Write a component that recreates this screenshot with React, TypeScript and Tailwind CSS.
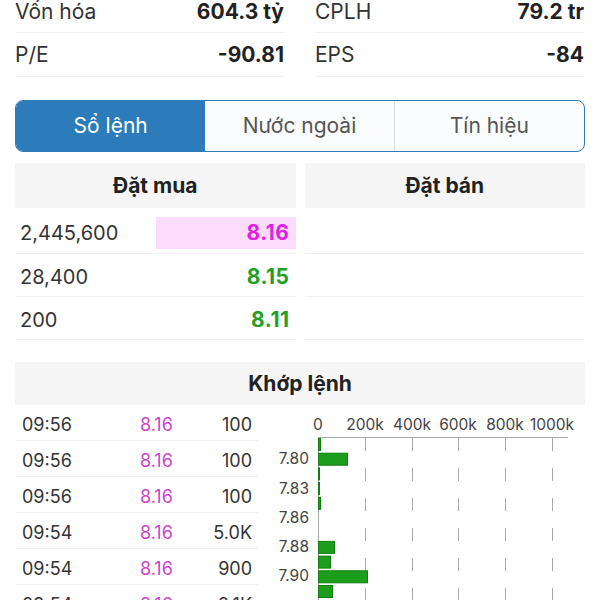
import React from 'react';

const font = { fontFamily: 'Inter, "Liberation Sans", Arial, sans-serif' };

const stats = [
  [
    { label: 'Vốn hóa', value: '604.3 tỷ' },
    { label: 'CPLH', value: '79.2 tr' },
  ],
  [
    { label: 'P/E', value: '-90.81' },
    { label: 'EPS', value: '-84' },
  ],
];

const bids = [
  { vol: '2,445,600', price: '8.16', ref: true, h: 'h-[46px] pt-[5px]' },
  { vol: '28,400', price: '8.15', ref: false, h: 'h-[43px] pt-[3px]' },
  { vol: '200', price: '8.11', ref: false, h: 'h-[43px] pt-[3px]' },
];

const trades = [
  { t: '09:56', p: '8.16', v: '100' },
  { t: '09:56', p: '8.16', v: '100' },
  { t: '09:56', p: '8.16', v: '100' },
  { t: '09:54', p: '8.16', v: '5.0K' },
  { t: '09:54', p: '8.16', v: '900' },
  { t: '09:54', p: '8.16', v: '2.1K' },
];

// bar widths in px (47px = 200k)
const bars = [2, 29, 1, 1, 2, 0, 0, 16, 12, 49, 14];
const yLabels = [
  { text: '7.80', y: 55 },
  { text: '7.83', y: 85 },
  { text: '7.86', y: 114 },
  { text: '7.88', y: 143 },
  { text: '7.90', y: 172 },
];
const ticks = [
  { x: 60, text: '0' },
  { x: 107, text: '200k' },
  { x: 154, text: '400k' },
  { x: 200, text: '600k' },
  { x: 247, text: '800k' },
  { x: 294, text: '1000k' },
];

const VolumeChart: React.FC = () => (
  <svg width="326" height="200" viewBox="0 0 326 200" style={font}>
    {ticks.map((t) => (
      <text key={t.text} x={t.x} y={26} fontSize="15.5" fill="#444" textAnchor="middle">
        {t.text}
      </text>
    ))}
    <line x1="60" y1="33.5" x2="310" y2="33.5" stroke="#aaa" strokeWidth="1" />
    {ticks.slice(1).map((t) => (
      <line
        key={t.x}
        x1={t.x + 0.5}
        y1="34"
        x2={t.x + 0.5}
        y2="200"
        stroke="#aaa"
        strokeWidth="1"
        strokeDasharray="13 17"
      />
    ))}
    <line x1="60.5" y1="33" x2="60.5" y2="200" stroke="#aaa" strokeWidth="1" />
    {bars.map((w, i) =>
      w > 0 ? (
        <rect
          key={i}
          x="60.5"
          y={34.5 + i * 14.7}
          width={w}
          height="12"
          fill="#1c9e1c"
          stroke="#0f7d0f"
          strokeWidth="1"
        />
      ) : null
    )}
    {yLabels.map((l) => (
      <text key={l.text} x="51" y={l.y + 5} fontSize="15.5" fill="#444" textAnchor="end">
        {l.text}
      </text>
    ))}
  </svg>
);

export default function App() {
  return (
    <div className="w-[600px] h-[600px] overflow-hidden bg-white text-[#333]" style={font}>
      <div className="px-[15px] -mt-[9px]">
        {/* stats */}
        {stats.map((row, ri) => (
          <div key={ri} className="grid grid-cols-2 gap-[30px]">
            {row.map((s) => (
              <div
                key={s.label}
                className={`${ri === 0 ? 'h-[42px] pt-[1px]' : 'h-[44px]'} flex items-center justify-between border-b border-[#f0f0f0] pr-[1px]`}
              >
                <span className="text-[21px]">{s.label}</span>
                <span className="text-[21px] font-bold text-[#222]">{s.value}</span>
              </div>
            ))}
          </div>
        ))}

        {/* tabs */}
        <div className="mt-[23px] h-[52px] grid grid-cols-3 rounded-[8px] border-[1.5px] border-[#2e7bb8] overflow-hidden bg-[#fbfcfd]">
          <div className="flex items-center justify-center bg-[#2c7bba] text-white text-[21px]">Sổ lệnh</div>
          <div className="flex items-center justify-center text-[21px] text-[#555] border-r border-[#d8dde2]">
            Nước ngoài
          </div>
          <div className="flex items-center justify-center text-[21px] text-[#555]">Tín hiệu</div>
        </div>

        {/* order book */}
        <div className="mt-[11px] grid grid-cols-2 gap-[9px]">
          <div>
            <div className="h-[45px] bg-[#f5f5f5] flex items-center justify-center text-[21px] font-bold text-[#222]">
              Đặt mua
            </div>
            {bids.map((b) => (
              <div key={b.vol} className={`${b.h} flex items-center border-b border-[#f0f0f0]`}>
                <span className="flex-1 pl-[5px] text-[20px]">{b.vol}</span>
                <span
                  className={
                    b.ref
                      ? 'w-[140px] h-[32px] flex items-center justify-end pr-[6px] bg-[#fcdcfb] text-[#e01fe0] text-[21px] font-bold tracking-[0.5px]'
                      : 'w-[140px] h-[32px] flex items-center justify-end pr-[6px] text-[#24a024] text-[21px] font-bold tracking-[0.5px]'
                  }
                >
                  {b.price}
                </span>
              </div>
            ))}
          </div>
          <div>
            <div className="h-[45px] bg-[#f5f5f5] flex items-center justify-center text-[21px] font-bold text-[#222]">
              Đặt bán
            </div>
            {bids.map((b) => (
              <div key={b.vol} className={`${b.h} border-b border-[#f0f0f0]`} />
            ))}
          </div>
        </div>

        {/* matched orders */}
        <div className="mt-[22px] h-[43px] bg-[#f5f5f5] flex items-center justify-center text-[21px] font-bold text-[#222]">
          Khớp lệnh
        </div>
        <div className="flex">
          <div className="w-[243px] shrink-0">
            {trades.map((tr, i) => (
              <div key={i} className="h-[36px] pt-[3px] flex items-center border-b border-[#f0f0f0] text-[18px]">
                <span className="w-[125px] pl-[7px] text-[#333]">{tr.t}</span>
                <span className="w-[50px] text-[#cc44cc]">{tr.p}</span>
                <span className="flex-1 text-right pr-[6px] text-[#333]">{tr.v}</span>
              </div>
            ))}
          </div>
          <div className="flex-1 -mt-[1px]">
            <VolumeChart />
          </div>
        </div>
      </div>
    </div>
  );
}
